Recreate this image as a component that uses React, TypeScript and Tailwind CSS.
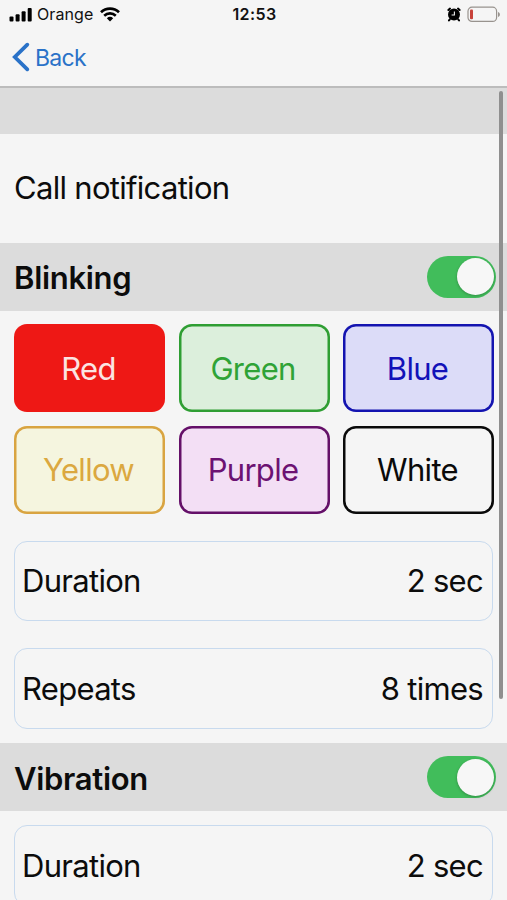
import { useState } from "react";
import { clsx } from "clsx";

const colors = [
  { id: "red", label: "Red", className: "bg-[#ee1815] text-[#fbe4e2]" },
  { id: "green", label: "Green", className: "bg-[#dcefdc] text-[#2fa336] shadow-[inset_0_0_0_2.5px_#2f9e33]" },
  { id: "blue", label: "Blue", className: "bg-[#dcdcf8] text-[#1212b8] shadow-[inset_0_0_0_2.5px_#1414b0]" },
  { id: "yellow", label: "Yellow", className: "bg-[#f5f5df] text-[#dba840] shadow-[inset_0_0_0_2.5px_#d9a441]" },
  { id: "purple", label: "Purple", className: "bg-[#f3dff5] text-[#6c1272] shadow-[inset_0_0_0_2.5px_#641068]" },
  { id: "white", label: "White", className: "bg-[#f5f5f5] text-[#0a0a0a] shadow-[inset_0_0_0_2.5px_#0a0a0a]" },
];

function StatusBar() {
  return (
    <div className="grid h-[28px] shrink-0 grid-cols-3 items-center pr-[7px] pl-[9px] text-[#111]">
      <div className="flex items-center">
        <svg width="24" height="15" viewBox="0 0 24 15" fill="#000" aria-hidden="true">
          <rect x="0.5" y="9.6" width="4" height="5" rx="1" />
          <rect x="6.6" y="7.3" width="4" height="7.3" rx="1" />
          <rect x="12.6" y="4.3" width="4" height="10.3" rx="1" />
          <rect x="18.7" y="1" width="4" height="13.6" rx="1" />
        </svg>
        <span className="ml-[4px] text-[16px] leading-none tracking-[0.1px]">Orange</span>
        <svg className="ml-[7px]" width="20" height="15" viewBox="0 0 20 15" fill="none" stroke="#000" aria-hidden="true">
          <path d="M1 5.3a13 13 0 0 1 18 0" strokeWidth="2.7" />
          <path d="M4.2 8.7a8.4 8.4 0 0 1 11.6 0" strokeWidth="2.6" />
          <path d="M10 14.6 6.8 11.3a4.7 4.7 0 0 1 6.4 0Z" fill="#000" stroke="none" />
        </svg>
      </div>
      <span className="text-center text-[16px] leading-none font-semibold tracking-[0.4px]">12:53</span>
      <div className="flex items-center justify-end gap-[6px]">
        <svg width="14" height="15" viewBox="0 0 14 15" aria-hidden="true">
          <circle cx="7" cy="7.6" r="6" fill="#000" />
          <path d="M1.4 3 3 1.6M12.6 3 11 1.6M2.8 12.4 2 13.4M11.2 12.4l.8 1" stroke="#000" strokeWidth="2" strokeLinecap="round" />
          <path d="M7.4 4.4v3.6H4.6" stroke="#eee" strokeWidth="1.1" fill="none" />
        </svg>
        <svg width="33" height="17" viewBox="0 0 33 17" aria-hidden="true">
          <rect x="1" y="1.2" width="28.6" height="14.2" rx="4" fill="none" stroke="#98938e" strokeWidth="1.2" />
          <rect x="3" y="3.4" width="3" height="9.8" rx="1" fill="#c8423a" />
          <path d="M31 6v5c1.3-.5 1.9-1.4 1.9-2.5S32.3 6.5 31 6Z" fill="#98938e" />
        </svg>
      </div>
    </div>
  );
}

function Toggle({ label }: { label: string }) {
  const [on, setOn] = useState(true);

  return (
    <button
      type="button"
      role="switch"
      aria-checked={on}
      aria-label={label}
      onClick={() => setOn(!on)}
      className={clsx("flex h-[42px] w-[69px] items-center rounded-full px-[2px]", on ? "justify-end bg-[#41bd5b]" : "justify-start bg-[#c8c8c8]")}
    >
      <span className="size-[37px] rounded-full bg-[#f7f7f7] shadow-[0_1px_3px_rgba(0,0,0,0.25)]" />
    </button>
  );
}

function SectionHeader({ title }: { title: string }) {
  return (
    <div className="flex h-[68px] shrink-0 items-center justify-between bg-[#dcdcdc] pr-[11px] pl-[14px]">
      <h2 className="pt-[2px] text-[31px] leading-none font-semibold tracking-[-0.3px]">{title}</h2>
      <Toggle label={title} />
    </div>
  );
}

function ValueRow({ label, value }: { label: string; value: string }) {
  return (
    <div className="flex h-[80.5px] shrink-0 items-center justify-between rounded-[13px] border border-[#c8daee] pr-[9px] pl-[7px] text-[31px] leading-none tracking-[-0.7px]">
      <span>{label}</span>
      <span>{value}</span>
    </div>
  );
}

export default function App() {
  return (
    <div className="relative flex h-[900px] w-[507px] flex-col overflow-hidden bg-[#f5f5f5] font-['Inter','Liberation_Sans',sans-serif] text-[#0c0c0c]">
      <StatusBar />
      <nav className="flex h-[60px] shrink-0 items-center border-b-2 border-[#bcbcbc] pl-[12px]">
        <button type="button" className="flex items-center gap-[5px] text-[#2a72c8]">
          <svg width="18" height="30" viewBox="0 0 18 30" fill="none" stroke="currentColor" strokeWidth="3.8" strokeLinecap="round" aria-hidden="true">
            <path d="M15.3 2.7 2.8 15l12.5 12.3" />
          </svg>
          <span className="pt-[2px] text-[23px] leading-none tracking-[-0.7px]">Back</span>
        </button>
      </nav>

      <div className="h-[46px] shrink-0 bg-[#dcdcdc]" />
      <h1 className="flex h-[108.5px] shrink-0 items-center pb-[2px] pl-[14px] text-[31px] leading-none tracking-[-0.7px]">Call notification</h1>

      <SectionHeader title="Blinking" />
      <div className="grid shrink-0 grid-cols-3 gap-[13.5px] pt-[13.5px] pr-[13px] pl-[14px]">
        {colors.map((color) => (
          <button
            key={color.id}
            type="button"
            className={clsx("h-[88px] rounded-[13px] pr-[2px] text-[31px] leading-none tracking-[-0.7px]", color.className)}
          >
            {color.label}
          </button>
        ))}
      </div>
      <div className="flex shrink-0 flex-col gap-[27px] px-[14px] pt-[27px] pb-[14.5px]">
        <ValueRow label="Duration" value="2 sec" />
        <ValueRow label="Repeats" value="8 times" />
      </div>

      <SectionHeader title="Vibration" />
      <div className="flex shrink-0 flex-col px-[14px] pt-[14px]">
        <ValueRow label="Duration" value="2 sec" />
      </div>

      {/* scroll indicator */}
      <div className="absolute top-[91px] right-[4px] h-[608px] w-[4px] rounded-full bg-[#8f8f8f]" />
    </div>
  );
}
